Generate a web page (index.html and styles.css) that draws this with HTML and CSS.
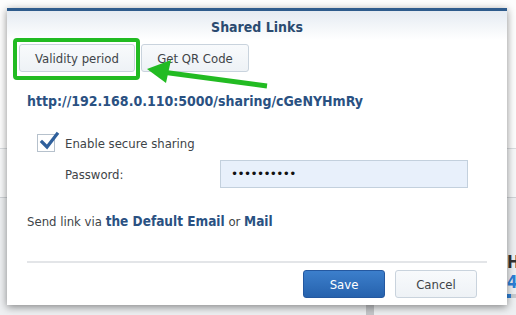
FILE: index.html
```html
<!DOCTYPE html>
<html>
<head>
<meta charset="utf-8">
<link rel="stylesheet" href="styles.css">
</head>
<body>
<div class="page">
  <div class="bg-top"></div>
  <div class="bg-mid"></div>
  <div class="bg-bottom">
    <div class="side-text">
      <div class="h">H</div>
      <div class="num">4</div>
      <div class="bar"></div>
    </div>
    <div class="vbar"></div>
  </div>
</div>

<div class="dialog">
  <div class="topline"></div>
  <div class="header">Shared Links</div>
  <div class="toolbar">
    <button class="btn">Validity period</button>
    <button class="btn">Get QR Code</button>
  </div>
  <div class="url">http://192.168.0.110:5000/sharing/cGeNYHmRy</div>
  <div class="check-row">
    <span class="checkbox">
      <svg width="22" height="22" viewBox="0 0 22 22"><path d="M4 11 L9 16 L19 3" fill="none" stroke="#2f609c" stroke-width="3.2" stroke-linecap="square"/></svg>
    </span>
    <span>Enable secure sharing</span>
  </div>
  <div class="pw-row">
    <span class="pw-label">Password:</span>
    <div class="pw-input">••••••••••</div>
  </div>
  <div class="send">Send link via <b>the Default Email</b> or <b>Mail</b></div>
  <div class="footer">
    <button class="btn-save">Save</button>
    <button class="btn-cancel">Cancel</button>
  </div>
</div>

<div class="highlight"></div>
<svg class="arrow" width="516" height="315" viewBox="0 0 516 315">
  <line x1="162" y1="72" x2="267" y2="86" stroke="#22bb22" stroke-width="5"/>
  <polygon points="147,69 171,60 166,83" fill="#22bb22"/>
</svg>
</body>
</html>
```

FILE: styles.css
```css
html, body {
  margin: 0;
  padding: 0;
}
body {
  width: 516px;
  height: 315px;
  overflow: hidden;
  position: relative;
  font-family: "DejaVu Sans", Verdana, sans-serif;
  font-stretch: condensed;
  background: #f4f5f6;
}
.page {
  display: flex;
  flex-direction: column;
  height: 315px;
}
.bg-top {
  height: 148px;
  background: #fdfdfd;
  border-bottom: 1px solid #d9dcdf;
}
.bg-mid {
  height: 48px;
  background: #f7f8f9;
  border-bottom: 1px solid #cfd3d7;
}
.bg-bottom {
  flex: 1;
  background: #eef0f2;
  display: flex;
  justify-content: flex-end;
  position: relative;
}
.side-text {
  width: 9px;
  padding-top: 54px;
  overflow: hidden;
}
.side-text .h {
  font-weight: bold;
  font-size: 17px;
  color: #333;
  line-height: 20px;
}
.side-text .num {
  font-weight: bold;
  font-size: 17px;
  color: #2d7fd6;
  line-height: 20px;
}
.side-text .bar {
  margin-top: 2px;
  height: 4px;
  background: linear-gradient(to right, #2d7fd6 0 4px, #c8cbcf 4px);
}
.vbar {
  position: absolute;
  left: 366px;
  top: 100px;
  width: 8px;
  height: 20px;
  background: #c4c6c9;
}

.dialog {
  position: absolute;
  left: 7px;
  top: 8px;
  width: 500px;
  height: 297px;
  background: #fff;
  box-shadow: 0 2px 8px rgba(0,0,0,0.45);
  display: flex;
  flex-direction: column;
  color: #404448;
  font-size: 13px;
}
.topline {
  height: 3px;
  background: #2e5b8c;
}
.header {
  height: 29px;
  background: linear-gradient(#e5ebf2, #fff);
  text-align: center;
  font-weight: bold;
  font-size: 14px;
  color: #2b4b70;
  line-height: 33px;
}
.toolbar {
  display: flex;
  gap: 6px;
  padding: 4px 0 0 12px;
}
.btn {
  height: 28px;
  padding: 0 10px;
  border: 1px solid #c9d3dd;
  border-radius: 3px;
  background: linear-gradient(#f8fafc, #eef2f6);
  font: inherit;
  font-stretch: condensed;
  font-size: 13px;
  color: #404448;
}
.btn:first-child { width: 116px; }
.btn:last-child { width: 108px; }
.url {
  margin: 21px 0 0 20px;
  font-weight: bold;
  color: #2a5182;
  font-size: 14px;
}
.check-row {
  display: flex;
  align-items: center;
  margin: 25px 0 0 30px;
  gap: 10px;
}
.checkbox {
  width: 16px;
  height: 16px;
  border: 1px solid #b6c1cc;
  position: relative;
  background: #fff;
}
.checkbox svg {
  position: absolute;
  left: 0;
  top: -4px;
}
.pw-row {
  display: flex;
  align-items: center;
  margin: 8px 0 0 58px;
}
.pw-label {
  width: 155px;
}
.pw-input {
  width: 236px;
  height: 26px;
  border: 1px solid #c3d0dd;
  background: #e8f0fb;
  padding-left: 10px;
  line-height: 26px;
  font-family: "DejaVu Sans", sans-serif;
  font-stretch: normal;
  font-size: 12px;
  color: #111;
  letter-spacing: -0.6px;
}
.send {
  margin: 25px 0 0 20px;
  font-size: 13px;
}
.send b {
  color: #2a5182;
  font-size: 13.5px;
}
.footer {
  margin: 32px 20px 0 20px;
  border-top: 2px solid #e3e5e8;
  padding: 7px 10px 0 0;
  display: flex;
  justify-content: flex-end;
  gap: 10px;
}
.btn-save, .btn-cancel {
  width: 82px;
  height: 28px;
  border-radius: 3px;
  font: inherit;
  font-stretch: condensed;
  font-size: 13px;
}
.btn-save {
  border: 1px solid #2458a0;
  background: linear-gradient(#3c7fcc, #2662ad);
  color: #fff;
}
.btn-cancel {
  border: 1px solid #c9d3dd;
  background: linear-gradient(#f8fafc, #eef2f6);
  color: #404448;
}
.highlight {
  position: absolute;
  left: 13px;
  top: 38px;
  width: 119px;
  height: 34px;
  border: 4px solid #22bb22;
  border-radius: 4px;
}
.arrow {
  position: absolute;
  left: 0;
  top: 0;
  pointer-events: none;
}
```
